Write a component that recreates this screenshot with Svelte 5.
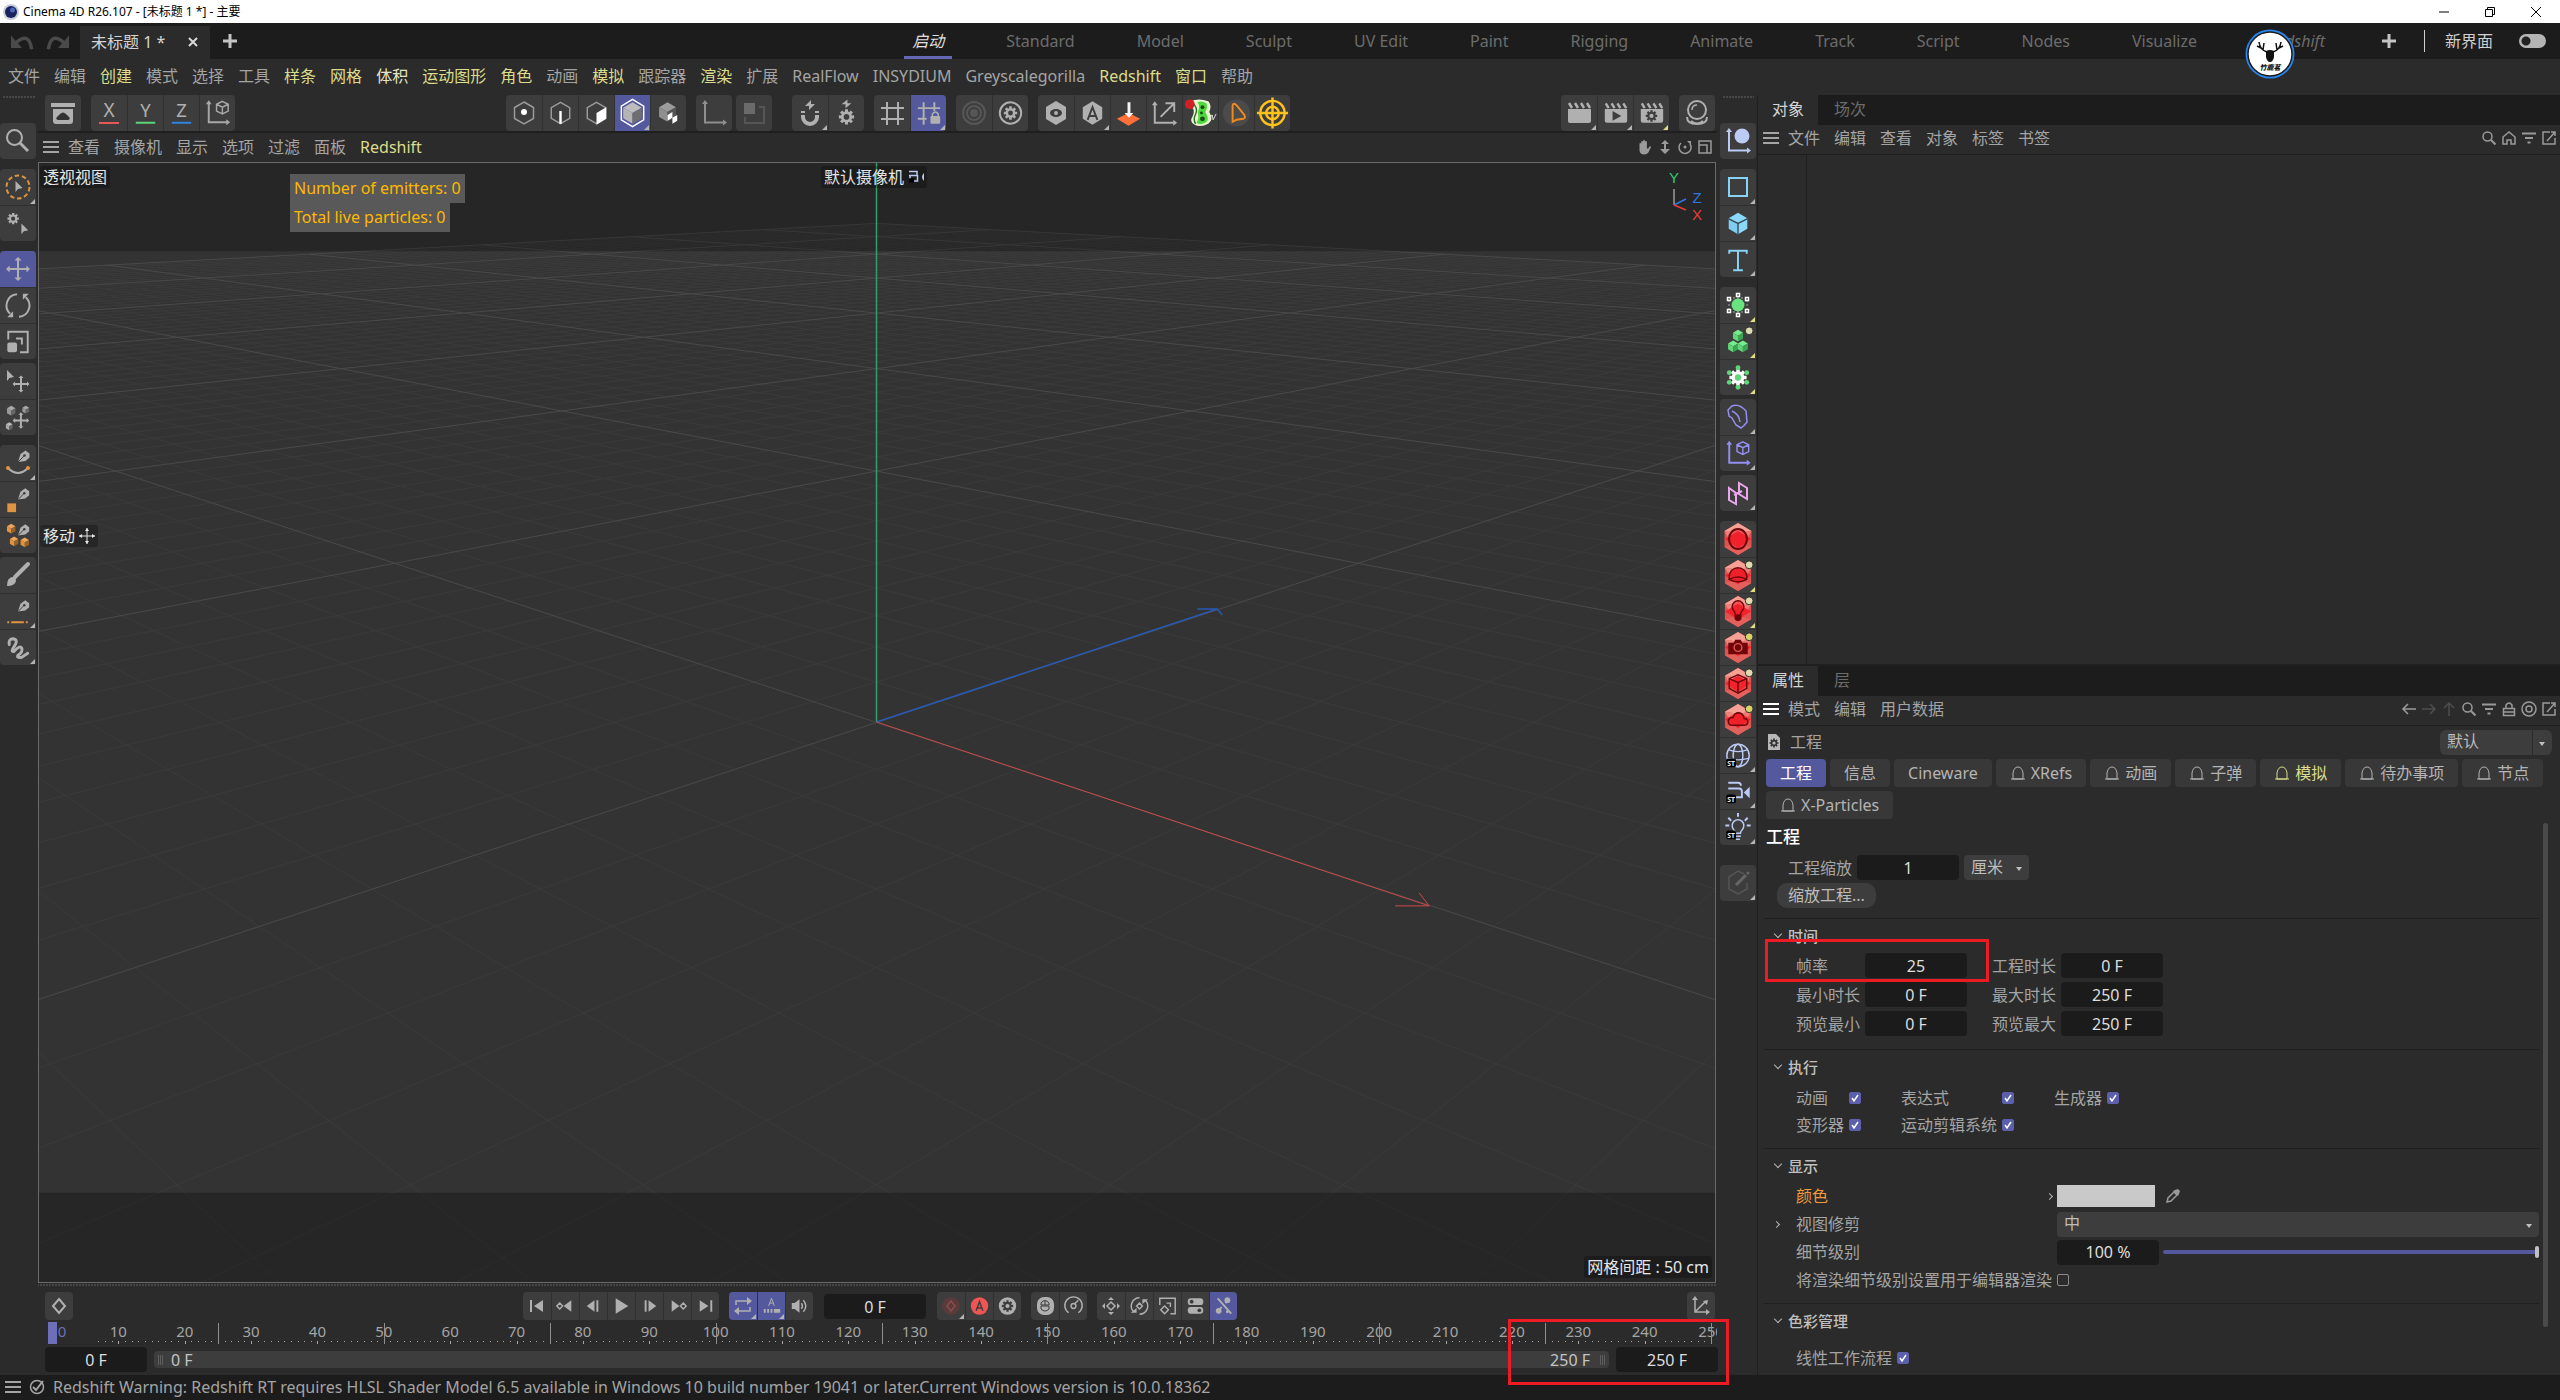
<script lang="ts">
	interface Tool {
		icon: string;
		label: string;
		on?: boolean;
		dim?: boolean;
		corner?: 'grey' | 'yellow';
	}
	interface Group {
		gap?: 'none' | 'tight' | 'wide';
		tools: Tool[];
	}

	const G = '#b0b0b0';
	const ORANGE = '#e09440';

	// ---- shared icon parts ----
	function gear(cx: number, cy: number, r: number, fill = G, hole = '#3d3d3d') {
		const pts: string[] = [];
		for (let i = 0; i < 8; i++) {
			const a = (i * Math.PI) / 4;
			for (const [off, k] of [
				[-0.27, 0.72],
				[-0.2, 1],
				[0.2, 1],
				[0.27, 0.72]
			]) {
				pts.push(`${(cx + Math.sin(a + off) * r * k).toFixed(2)},${(cy - Math.cos(a + off) * r * k).toFixed(2)}`);
			}
		}
		return `<polygon points="${pts.join(' ')}" fill="${fill}"/><circle cx="${cx}" cy="${cy}" r="${r * 0.36}" fill="${hole}"/>`;
	}

	function cross(cx: number, cy: number, s: number, w = 2) {
		const h = s * 0.3;
		return `<path d="M${cx - s + 2} ${cy}H${cx + s - 2}M${cx} ${cy - s + 2}V${cy + s - 2}" stroke="${G}" stroke-width="${w}"/>
			<path d="M${cx} ${cy - s}l${h} ${h}h${-2 * h}zM${cx} ${cy + s}l${h} ${-h}h${-2 * h}zM${cx - s} ${cy}l${h} ${h}v${-2 * h}zM${cx + s} ${cy}l${-h} ${h}v${-2 * h}z" fill="${G}"/>`;
	}

	function cube(cx: number, cy: number, s: number, top: string, left: string, right: string) {
		const w = s * 0.87;
		const h = s / 2;
		return `<path d="M${cx} ${cy - s}l${w} ${h}l${-w} ${h}l${-w} ${-h}z" fill="${top}"/>
			<path d="M${cx - w} ${cy - h}l${w} ${h}v${s}l${-w} ${-h}z" fill="${left}"/>
			<path d="M${cx + w} ${cy - h}l${-w} ${h}v${s}l${w} ${-h}z" fill="${right}"/>`;
	}

	const nib = `<path d="M18 17l2.500-8 5-3.500 4 3v4l-4 3.500z" fill="${G}"/><path d="M18 17l6-6" stroke="#3d3d3d"/><circle cx="24.500" cy="10.500" r="1.300" fill="#3d3d3d"/>`;
	const nibHigh = `<g transform="translate(0 1)">${nib}</g>`;
	const cursor = (x: number, y: number) => `<path d="M${x} ${y}v11l2.500-3 4.500-1z" fill="${G}"/>`;
	const hexLine = `<path d="M18 7l9.500 5.500v11L18 29l-9.500-5.500v-11z" fill="none" stroke="#9a9a9a" stroke-width="1.500"/>`;
	const axes = (c: string) =>
		`<path d="M9 8v19.500h19" fill="none" stroke="${c}" stroke-width="2"/><path d="M9 5l3 4H6zM31 27.500l-4-3v6z" fill="${c}"/>`;
	const wireCube = (c: string) =>
		`<path d="M23 6l6 3v7l-6 3-6-3V9zM17 9l6 3 6-3M23 12v7" fill="none" stroke="${c}" stroke-width="1.500"/>`;
	const grid4 = '<path d="M13 7v23M24 7v23M7 13h23M7 24h23" stroke="#b0b0b0" stroke-width="2"/>';
	const letter = (ch: string, colour: string) =>
		`<text x="18" y="22" text-anchor="middle" font-size="19" fill="${G}">${ch}</text><path d="M8 28h20" stroke="${colour}" stroke-width="2"/>`;
	const clapper = `<path d="M7 14h23v12q0 2-2 2H9q-2 0-2-2z" fill="${G}"/><path d="M8 8l3 5M14 8l3 5M20 8l3 5M26 8l3 5" stroke="${G}" stroke-width="2.500"/>`;
	const redHex = (inner: string) => `<path d="M18 2l13.500 8v16L18 34 4.500 26V10z" fill="#e0524f"/>
		<path d="M18 2l13.500 8L18 12 4.500 10z" fill="#f5a196"/><path d="M4.500 10L18 12l-9 6z" fill="#ee857d"/><path d="M31.500 10L18 12l9 6z" fill="#ec7a72"/>
		<path d="M4.500 26L18 34l13.500-8-9-2h-9z" fill="#e4605c"/><path d="M4.500 18l7-4 6.500-4 6.500 4 7 4-7 4-6.500 5-6.500-5z" fill="#f3222c"/>${inner}`;
	const dark = '#6d0509';
	const dot = (c: string) => `<circle cx="29.500" cy="7" r="4" fill="${c}" stroke="#2b2b2b"/>`;
	const st = `<rect x="6" y="21" width="10" height="9" rx="2" fill="#000"/><text x="11" y="28.500" text-anchor="middle" font-size="7" font-weight="700" fill="#e8ecff">ST</text>`;
	const sky = '#bccbf5';

	// 36 x 36 drawings
	const big: Record<string, string> = {
		search: `<circle cx="14.500" cy="14.500" r="7.500" fill="none" stroke="${G}" stroke-width="2"/><path d="M20 20l8 8" stroke="${G}" stroke-width="3"/>`,
		live: `<circle cx="18" cy="18" r="11.500" fill="none" stroke="${ORANGE}" stroke-width="2" stroke-dasharray="4.500 2.720"/>${cursor(15.5, 12)}`,
		gearCursor: gear(13, 13, 6) + cursor(21.5, 18),
		move: cross(18, 18, 12),
		rotate: `<path d="M17 6.500A11.500 11.500 0 0 0 10 26.500M19 29.500A11.500 11.500 0 0 0 26 9.500" fill="none" stroke="${G}" stroke-width="2"/><path d="M13 30H7l6-6zM23 6h6l-6 6z" fill="${G}"/>`,
		scale: `<path d="M8 16V8h20v21H20" fill="none" stroke="${G}" stroke-width="2"/><rect x="7" y="19" width="10" height="10" rx="2" fill="${G}"/><path d="M16 15h6v6" fill="none" stroke="${G}" stroke-width="2"/>`,
		place: cursor(7, 7) + cross(21, 21, 8.5),
		scatter: cube(11, 11, 5, '#aaa', '#999', '#666') + cube(26, 10, 4, '#aaa', '#999', '#666') + cube(9, 27, 4, '#bbb', '#aaa', '#666') + cross(21, 21, 8.5),
		spline: nib + `<path d="M8 23q10 10 20 0" fill="none" stroke="${G}" stroke-width="2"/><circle cx="8" cy="23" r="2" fill="${ORANGE}"/><circle cx="28" cy="23" r="2" fill="${ORANGE}"/>`,
		polyPen: nibHigh + `<rect x="7" y="22" width="9" height="9" fill="${ORANGE}"/>`,
		cubesPen: nibHigh + [[11, 11], [14, 24], [25, 25]].map(([x, y]) => cube(x, y, 5, '#eda75a', '#e09440', '#9c6328')).join(''),
		brush: `<path d="M28 7L15 20" stroke="${G}" stroke-width="4" stroke-linecap="round"/><path d="M7 29q0-8 5-9 4 0 4 4-1 5-9 5z" fill="${G}"/>`,
		dashPen: nibHigh + `<path d="M7 29h2M11 29h13M26 29h2" stroke="${ORANGE}" stroke-width="2"/>`,
		squiggle: `<path d="M9 15q-1-6 4-6 6 1 1 8-4 6 0 5 6-7 8-3 1 4-4 7-2 3 4 2l6-4" fill="none" stroke="${G}" stroke-width="3" stroke-linecap="round"/>`,
		archive: `<rect x="6" y="8" width="24" height="4" fill="${G}"/><path d="M8 14h20v12q0 3-3 3H11q-3 0-3-3z" fill="${G}"/><path d="M13 25q-3-1-1-3l2-2q4-5 8 0l2 2q2 2-1 3z" fill="#333"/>`,
		axisX: letter('X', '#e45858'),
		axisY: letter('Y', '#5fd378'),
		axisZ: letter('Z', '#2f82e0'),
		coords: axes('#a8a8a8') + wireCube('#a8a8a8'),
		point: hexLine + '<circle cx="18" cy="17" r="3" fill="#fff"/>',
		edge: hexLine + '<path d="M18 16v13" stroke="#fff" stroke-width="2.500"/>',
		poly: hexLine + '<path d="M18 18l10-6v12l-10 6z" fill="#fff"/>',
		object: '<path d="M18 4l11.500 7v14L18 32 6.500 25V11z" fill="none" stroke="#fff" stroke-width="1.500"/>' + cube(18, 18, 11, '#bdbdbd', '#b5b5b5', '#6f6f6f'),
		uv: cube(17, 17, 10, '#9c9c9c', '#8f8f8f', '#555') + '<path d="M17 20l5-3v6l5-3v6l-5 3v-6l-5 3z" fill="#fff"/>',
		axis: axes('#8f8f8f'),
		tweak: '<rect x="8" y="8" width="11" height="11" fill="#6a6a6a"/><path d="M23 12h5v16H9v-6" fill="none" stroke="#555" stroke-width="2"/>',
		snap: `<path d="M11 16v6a7 7 0 0 0 14 0v-6" fill="none" stroke="${G}" stroke-width="4"/><path d="M9 19h18" stroke="#3d3d3d" stroke-width="2"/><path d="M19 5l-6 6h4v4l6-6h-4z" fill="${G}"/>`,
		snapGear: gear(18, 22, 8) + `<path d="M19 4l-6 5h4v4l6-5h-4z" fill="${G}"/>`,
		grid: grid4,
		gridLock: '<path d="M13 7v23M24 7v9M7 13h23M7 24h9" stroke="#b0b0b0" stroke-width="2"/><rect x="20" y="21" width="10" height="8" rx="1" fill="#b0b0b0"/><path d="M22 21v-2q3-4 6 0v2" fill="none" stroke="#b0b0b0" stroke-width="1.500"/>',
		soft: '<g fill="none" stroke="#565656" stroke-width="2"><circle cx="18" cy="18" r="11"/><circle cx="18" cy="18" r="7"/></g><circle cx="18" cy="18" r="4" fill="#565656"/>',
		softGear: `<circle cx="18" cy="18" r="11" fill="none" stroke="${G}" stroke-width="2"/>` + gear(18, 18, 7),
		view: `<path d="M18 6l10 6v12l-10 6-10-6V12z" fill="${G}"/><ellipse cx="18" cy="18" rx="6" ry="4" fill="#3d3d3d"/><circle cx="18" cy="18" r="2" fill="${G}"/>`,
		auto: `<path d="M18 6l10 6v12l-10 6-10-6V12z" fill="${G}"/><path d="M13 25l5-13 5 13M15 21h6" fill="none" stroke="#3d3d3d" stroke-width="2"/>`,
		drop: '<path d="M18 18l12 6-12 7-12-7z" fill="#ff7038"/><path d="M17 7h3v11h3l-4.500 5-4.500-5h3z" fill="#f4f4f4"/>',
		workplane: `<path d="M8 9v19h20" fill="none" stroke="${G}" stroke-width="2"/><path d="M8 6l3 4H5zM31 28l-4-3v6z" fill="${G}"/><path d="M14 22L28 8M19 8h9v9" fill="none" stroke="${G}" stroke-width="2"/>`,
		plugin: '<path d="M8 6q8-4 18 0 4 4 1 11 5 8-1 12-8 4-14 1-6-3-2-9 3-8-2-9z" fill="#e9f5cf"/><path d="M15 7q4-2 9 1 2 4-1 9 5 8 0 11-6 3-9 0 3-5 1-11 3-5 0-10z" fill="#4fd83f"/><path d="M10 8q6 5 3 11-3 6 0 10" fill="none" stroke="#2e6d2a" stroke-width="1.500"/><circle cx="20" cy="12" r="2" fill="#174d17"/><circle cx="19" cy="18" r="1.500" fill="#174d17"/><circle cx="20" cy="24" r="2.500" fill="#174d17"/><circle cx="7" cy="9" r="5" fill="#d32027"/><path d="M27 24l3-4 1 5 3-6" fill="none" stroke="#ddd"/>',
		arrowO: '<circle cx="18" cy="18" r="14" fill="#4b4b4b"/><path d="M14 10v17l4-2 7-1q3-1 1-4l-8-10q-3-3-4 0z" fill="none" stroke="#f08a1d" stroke-width="2"/>',
		target: '<g fill="none" stroke="#ffc21a" stroke-width="2.500"><circle cx="18" cy="18" r="12.500"/><circle cx="18" cy="18" r="6.500"/><path d="M18 2v32M2 18h32"/></g>',
		clap: clapper,
		clapPlay: clapper + '<path d="M15 16l9 5-9 5z" fill="#3d3d3d"/>',
		clapGear: clapper + gear(18, 21, 6, '#3d3d3d', G),
		material: `<circle cx="18" cy="15" r="9" fill="none" stroke="${G}" stroke-width="2"/><path d="M13 15q0-5 5-5" fill="none" stroke="${G}" stroke-width="1.500"/><path d="M8 22q0 7 10 7t10-7M12 26q6 5 12 0" fill="none" stroke="${G}" stroke-width="2"/>`,
		nullObj: axes(sky) + `<circle cx="22" cy="13" r="7.500" fill="${sky}"/>`,
		rect: '<rect x="9" y="9" width="18" height="18" fill="none" stroke="#86d3f5" stroke-width="2"/>',
		cubeBlue: cube(18, 18, 11, '#8ad8fa', '#7fcdf2', '#8ad8fa') + '<path d="M8 13l10 5 10-5M18 18v11" fill="none" stroke="#3a4c58" stroke-width="1.500"/>',
		textObj: '<path d="M9 12V9h18v3M18 9v20M13 29h10" fill="none" stroke="#86d3f5" stroke-width="2"/>',
		subdiv: '<rect x="9" y="11" width="18" height="14" fill="none" stroke="#aaa" stroke-dasharray="2 2"/><circle cx="18" cy="18" r="6.500" fill="#68e37f"/><g fill="#3d3d3d" stroke="#fff" stroke-width="1.500"><path d="M16.500 6.500h3v3h-3zM16.500 26.500h3v3h-3zM7.500 10.500h3v3h-3zM25.500 10.500h3v3h-3zM7.500 22.500h3v3h-3zM25.500 22.500h3v3h-3z"/></g>',
		cloner: [[18, 12], [13, 23], [23, 23]].map(([x, y]) => cube(x, y, 6, '#77ec8f', '#5fd677', '#3aa653')).join('') + dot('#dedcae'),
		effector: gear(18, 18, 9, '#fff', '#5fd677') + [[18, 8], [18, 28], [9, 13], [27, 13], [9, 23], [27, 23]].map(([x, y]) => `<circle cx="${x}" cy="${y}" r="2.500" fill="#5fd677"/>`).join(''),
		bend: '<path d="M12 7q7-3 14 5l1 11q-3 4-6 6l-5-3-4-7-3-2-1-6z" fill="none" stroke="#938fee" stroke-width="1.500"/><path d="M12 12q7 3 8 11" fill="none" stroke="#938fee" stroke-width="1.500"/>',
		deformAxis: axes('#938fee') + wireCube('#938fee'),
		field: '<path d="M9 13l7 5v11l-7-4zM19 8l8 5v11l-8-5zM14 20l8-4" fill="none" stroke="#eba6ee" stroke-width="2"/>',
		rsSphere: redHex(`<ellipse cx="18" cy="18" rx="9" ry="10" fill="#ef1f29" fill-opacity="0.5" stroke="${dark}" stroke-width="2"/>`),
		rsDome: redHex(`<path d="M9 22v-3a9 9 0 0 1 18 0v3q-9 5-18 0 9-5 18 0" fill="#ef1f29" fill-opacity="0.6" stroke="${dark}" stroke-width="1.500"/>`) + dot('#dedcae'),
		rsLight: redHex(`<path d="M15.500 22q0-3-2-5a6 6 0 1 1 9 0q-2 2-2 5z" fill="#ef1f29" fill-opacity="0.6" stroke="${dark}" stroke-width="1.500"/><path d="M14.500 21h7v5q-3.500 4-7 0z" fill="${dark}"/>`) + dot('#dedcae'),
		rsCamera: redHex(`<path d="M8 13h6l1-3h6l1 3h6v12H8z" fill="${dark}"/><circle cx="18" cy="18" r="4" fill="none" stroke="#e0524f" stroke-width="1.500"/>`) + dot('#d8d26a'),
		rsCube: redHex(`<path d="M18 9l9 4v10l-9 5-9-5V13zM9 13l9 4 9-4M18 17v11" fill="none" stroke="${dark}" stroke-width="1.500"/>`) + dot('#dedcae'),
		rsCloud: redHex(`<path d="M11 24h14q4-1 3-5-1-2-4-2 0-5-5-6-5 0-6 5-5 0-5 4 0 3 3 4z" fill="#ef1f29" fill-opacity="0.6" stroke="${dark}" stroke-width="1.500"/>`) + dot('#d8d26a'),
		globe: `<g fill="none" stroke="${sky}" stroke-width="1.500"><circle cx="18" cy="18" r="11.500"/><ellipse cx="18" cy="18" rx="5" ry="11.500"/><path d="M8 12q10 4 20 0M7 21q11 3 22 0"/></g>${st}`,
		camera: `<path d="M8 9h10q3 0 3 3M8 15h11q3 0 3 3v6H10" fill="none" stroke="${sky}" stroke-width="2"/><path d="M30 13v12l-6-6z" fill="${sky}"/>${st}`,
		bulb: `<path d="M15.500 24q0-2-2-4a6 6 0 1 1 9 0q-2 2-2 4zM15 27h6M16 30h4" fill="none" stroke="${sky}" stroke-width="1.500"/><path d="M18 3v4M8 8l3 3M28 8l-3 3M5 16h4M27 16h4" stroke="${sky}" stroke-width="2"/>${st}`,
		asset: '<path d="M24 9l-6-3-9 6v12l9 5 9-5v-6" fill="none" stroke="#555" stroke-width="1.500"/><path d="M16 20L26 10" stroke="#666" stroke-width="3"/><circle cx="28" cy="8" r="1.500" fill="#666"/>'
	};

	// 28 x 28 drawings
	const mid: Record<string, string> = {
		key: `<path d="M14 7l6 7-6 7-6-7z" fill="none" stroke="${G}" stroke-width="2"/>`,
		start: `<path d="M7 8h2v12H7zM20 8v12l-9-6z" fill="${G}"/>`,
		prevKey: `<path d="M20 8v12l-8-6z" fill="${G}"/><path d="M8 11l3 3-3 3-3-3z" fill="none" stroke="${G}" stroke-width="1.500"/>`,
		prev: `<path d="M15 8v12l-8-6zM17 8h2v12h-2z" fill="${G}"/>`,
		play: `<path d="M8 6l13 8-13 8z" fill="${G}"/>`,
		next: `<path d="M13 8v12l8-6zM9 8h2v12H9z" fill="${G}"/>`,
		nextKey: `<path d="M8 8v12l8-6z" fill="${G}"/><path d="M20 11l3 3-3 3-3-3z" fill="none" stroke="${G}" stroke-width="1.500"/>`,
		end: `<path d="M19 8h2v12h-2zM8 8v12l9-6z" fill="${G}"/>`,
		loop: `<path d="M7 13V9h12M21 15v4H9" fill="none" stroke="${G}" stroke-width="1.500"/><path d="M18 5l5 4-5 4zM10 15l-5 4 5 4z" fill="${G}"/>`,
		autoTime: `<path d="M11 14l3-8 3 8M12 11h4" fill="none" stroke="${G}"/><path d="M6 19h14" stroke="${G}" stroke-width="4" stroke-dasharray="2 1.500"/><path d="M18 17h5v4h-5z" fill="${G}"/>`,
		sound: `<path d="M6 11h3l5-4v14l-5-4H6z" fill="${G}"/><path d="M16 11q2 3 0 6M18 8q5 6 0 12" fill="none" stroke="${G}" stroke-width="1.500"/>`,
		record: '<circle cx="14" cy="14" r="9" fill="#5a3b3b"/><path d="M14 9l4 5-4 5-4-5z" fill="none" stroke="#8a4a4a" stroke-width="1.500"/>',
		autoKey: '<circle cx="14" cy="14" r="9" fill="#f05455"/><path d="M10.500 19L14 9.500l3.500 9.500M12 16h4" fill="none" stroke="#3d3d3d" stroke-width="1.500"/>',
		keyGear: `<circle cx="14" cy="14" r="9" fill="${G}"/>` + gear(14, 14, 6, '#3d3d3d', G),
		mouse: `<rect x="6" y="5" width="17" height="18" rx="7" fill="${G}"/><path d="M10 13h8v-2q-4-5-8 0zM14 9v4M10 14v3q4 4 8 0v-3z" fill="none" stroke="#3d3d3d"/>`,
		gauge: `<path d="M9 21a9 9 0 1 1 10 0" fill="none" stroke="${G}" stroke-width="1.500"/><circle cx="14" cy="14" r="2.500" fill="none" stroke="${G}" stroke-width="1.500"/><path d="M15 12l4-4" stroke="${G}" stroke-width="1.500"/>`,
		posKey: `<path d="M14 10l4 4-4 4-4-4z" fill="none" stroke="${G}" stroke-width="1.500"/><path d="M14 5l3 3h-6zM14 23l3-3h-6zM5 14l3 3v-6zM23 14l-3 3v-6z" fill="${G}"/>`,
		rotKey: `<path d="M14 11l3 3-3 3-3-3z" fill="none" stroke="${G}" stroke-width="1.500"/><path d="M8 20A8.500 8.500 0 0 1 14 5.500M20 8a8.500 8.500 0 0 1-6 14.500" fill="none" stroke="${G}" stroke-width="1.500"/><path d="M5 21h6v-5zM23 7h-6v5z" fill="${G}"/>`,
		scaleKey: `<path d="M6 13V6h16v16h-5" fill="none" stroke="${G}" stroke-width="1.500"/><path d="M11 14l4 4-4 4-4-4z" fill="none" stroke="${G}" stroke-width="1.500"/><path d="M13 11h4v4" fill="none" stroke="${G}" stroke-width="1.500"/>`,
		paramKey: `<rect x="6" y="6" width="16" height="7" rx="3" fill="${G}"/><rect x="6" y="15" width="16" height="7" rx="3" fill="${G}"/><circle cx="10" cy="9.500" r="2" fill="#3d3d3d"/><circle cx="18" cy="18.500" r="2" fill="#3d3d3d"/>`,
		plaKey: `<path d="M8 6l14 16M9 19l3-4M16 11l3-3" stroke="${G}" stroke-width="2"/><circle cx="9" cy="19" r="3" fill="${G}"/><circle cx="18" cy="8" r="3" fill="${G}"/><circle cx="18" cy="20" r="1.500" fill="${G}"/>`,
		curve: `<path d="M8 7v13h12M9 19L18 10" fill="none" stroke="${G}" stroke-width="1.500"/><path d="M8 4l3 4H5zM23 20l-4-3v6zM21 8l-1 5-4-4z" fill="${G}"/>`
	};

	// 16 x 16 drawings
	const small: Record<string, string> = {
		menu: '<path d="M0 3h16M0 8h16M0 13h16" stroke="currentColor" stroke-width="2"/>',
		undo: '<path d="M4 9q9-8 11 5" fill="none" stroke="currentColor" stroke-width="2.500"/><path d="M0 4v9h8z" fill="currentColor"/>',
		redo: '<path d="M16 4v9H8z" fill="currentColor"/><path d="M12 9Q3 1 1 14" fill="none" stroke="currentColor" stroke-width="2.500"/>',
		hand: '<path d="M2.500 9V4.500q.8-1 1.700 0V8 2.500q1-1 1.900 0V7.500 1.500q1-1 1.900 0v6 -5q1-1 1.900 0V9l1 1 1.600-2.500q1.500-.5 1.500.5l-2.600 5.500q-1.500 2-4 2-4.500 0-4.900-4z" fill="currentColor"/>',
		updown: '<path d="M8 3v9" stroke="currentColor" stroke-width="2"/><path d="M8 1l4 4H4zM8 15l5-5H3z" fill="currentColor"/>',
		turn: '<path d="M4 4a6 6 0 1 0 9 1" fill="none" stroke="currentColor" stroke-width="1.500"/><circle cx="8" cy="8" r="1.500" fill="currentColor"/><path d="M10 2h4v4z" fill="currentColor"/>',
		panes: '<path d="M2 2h12v12H2zM2 6h8v8" fill="none" stroke="currentColor" stroke-width="1.500"/>',
		search: '<circle cx="6.500" cy="6.500" r="4.500" fill="none" stroke="currentColor" stroke-width="1.500"/><path d="M10 10l4.500 4.500" stroke="currentColor" stroke-width="2"/>',
		home: '<path d="M2 14V7l6-5 6 5v7h-4v-4H6v4z" fill="none" stroke="currentColor" stroke-width="1.500"/>',
		filter: '<path d="M1 3.500h14M4 8h8M6.500 12.500h3" stroke="currentColor" stroke-width="2"/>',
		open: '<path d="M9 2H2v12h12V8M10 2h4v4M14 2L6 11" fill="none" stroke="currentColor" stroke-width="1.500"/>',
		back: '<path d="M15 8H2M7 3L2 8l5 5" fill="none" stroke="currentColor" stroke-width="1.500"/>',
		forward: '<path d="M1 8h13M9 3l5 5-5 5" fill="none" stroke="currentColor" stroke-width="1.500"/>',
		up: '<path d="M8 15V2M3 7l5-5 5 5" fill="none" stroke="currentColor" stroke-width="1.500"/>',
		lock: '<path d="M2.500 7.500h11v7h-11zM5 7V4q3-4 6 0v3M2 11h12" fill="none" stroke="currentColor" stroke-width="1.500"/>',
		ring: '<circle cx="8" cy="8" r="7" fill="none" stroke="currentColor" stroke-width="1.500"/><circle cx="8" cy="8" r="3" fill="none" stroke="currentColor" stroke-width="1.500"/>',
		check: '<circle cx="8" cy="8" r="6.500" fill="none" stroke="currentColor" stroke-width="1.500"/><path d="M4 8l3 3 7-9" fill="none" stroke="currentColor" stroke-width="2"/>',
		bell: '<path d="M3 14V8q1-6 5-6t5 6v6zM1 14h14" fill="none" stroke="currentColor"/>',
		doc: '<path d="M2 0h8l4 4v12H2z" fill="#b8b8b8"/>' + gear(8, 9, 4.5, '#333', '#b8b8b8'),
		dropper: '<path d="M2 14l1-4 6-6 3 3-6 6z" fill="none" stroke="currentColor" stroke-width="1.500"/><path d="M8 3l5 5 1-2 1-3-2-2-3 1z" fill="currentColor"/>',
		cross: '<path d="M8 0v16M0 8h16" stroke="currentColor"/><path d="M8 0l2 3H6zM8 16l2-3H6zM0 8l3 2V6zM16 8l-3 2V6z" fill="currentColor"/>',
		cam: '<path d="M1 2.500h8v4H1M2 6.500v3M9.500 6v6H6" fill="none" stroke="#bccbf5" stroke-width="1.500"/><path d="M16 4v8q-4-4 0-8z" fill="#bccbf5"/><path d="M1 9.500h5v4H1z" fill="#000"/>',
		c4d: '<circle cx="8" cy="8" r="8" fill="#c9cedb"/><circle cx="8" cy="8" r="6" fill="#19245c"/><circle cx="9.500" cy="6" r="2.500" fill="#4c68b8"/>'
	};

	const t = (icon: string, label: string, extra: Partial<Tool> = {}): Tool => ({ icon, label, ...extra });

	const leftTools: Group[] = [
		{ tools: [t('search', '搜索')] },
		{ tools: [t('live', '实时选择', { corner: 'grey' }), t('gearCursor', '选择设置')] },
		{ tools: [t('move', '移动', { on: true }), t('rotate', '旋转'), t('scale', '缩放')] },
		{ gap: 'tight', tools: [t('place', '放置'), t('scatter', '散布')] },
		{ tools: [t('spline', '样条画笔', { corner: 'grey' }), t('polyPen', '多边形画笔'), t('cubesPen', '体积画笔')] },
		{ gap: 'tight', tools: [t('brush', '笔刷'), t('dashPen', '切线', { corner: 'grey' }), t('squiggle', '涂抹', { corner: 'grey' })] }
	];

	const rightTools: Group[] = [
		{ tools: [t('nullObj', '空白')] },
		{ tools: [t('rect', '矩形', { corner: 'grey' }), t('cubeBlue', '立方体', { corner: 'grey' }), t('textObj', '文本', { corner: 'grey' })] },
		{ tools: [t('subdiv', '细分曲面', { corner: 'yellow' }), t('cloner', '克隆', { corner: 'yellow' }), t('effector', '效果器', { corner: 'yellow' })] },
		{ gap: 'tight', tools: [t('bend', '弯曲', { corner: 'grey' }), t('deformAxis', '变形', { corner: 'grey' })] },
		{ gap: 'tight', tools: [t('field', '域', { corner: 'grey' })] },
		{
			tools: [
				t('rsSphere', 'RS 物理'),
				t('rsDome', 'RS 穹顶', { corner: 'yellow' }),
				t('rsLight', 'RS 灯光', { corner: 'yellow' }),
				t('rsCamera', 'RS 摄像机'),
				t('rsCube', 'RS 代理'),
				t('rsCloud', 'RS 体积'),
				t('globe', '天空', { corner: 'grey' }),
				t('camera', '摄像机', { corner: 'grey' }),
				t('bulb', '灯光', { corner: 'grey' })
			]
		},
		{ gap: 'wide', tools: [t('asset', '资产', { corner: 'grey' })] }
	];

	const topLeft: Group[] = [
		{ gap: 'none', tools: [t('archive', '资产浏览器')] },
		{ tools: [t('axisX', 'X 轴'), t('axisY', 'Y 轴'), t('axisZ', 'Z 轴'), t('coords', '坐标系统')] }
	];
	const topCentre: Group[] = [
		{
			gap: 'none',
			tools: [t('point', '点'), t('edge', '边'), t('poly', '多边形'), t('object', '模型', { on: true, corner: 'grey' }), t('uv', 'UV')]
		},
		{ tools: [t('axis', '启用轴心')] },
		{ gap: 'tight', tools: [t('tweak', '视窗独显', { dim: true })] },
		{ gap: 'wide', tools: [t('snap', '捕捉', { corner: 'grey' }), t('snapGear', '捕捉设置')] },
		{ tools: [t('grid', '工作平面'), t('gridLock', '锁定工作平面', { on: true, corner: 'grey' })] },
		{ tools: [t('soft', '柔和选择', { dim: true }), t('softGear', '柔和设置')] },
		{
			tools: [
				t('view', '显示'),
				t('auto', '自动', { corner: 'grey' }),
				t('drop', '落到地面'),
				t('workplane', '对齐'),
				t('plugin', '插件'),
				t('arrowO', '箭头'),
				t('target', '目标')
			]
		}
	];
	const topRight: Group[] = [
		{ gap: 'none', tools: [t('clap', '渲染视图', { corner: 'grey' }), t('clapPlay', '渲染到图像查看器', { corner: 'grey' }), t('clapGear', '渲染设置', { corner: 'yellow' })] },
		{ tools: [t('material', '材质')] }
	];

	const transport: Group[] = [
		{
			gap: 'none',
			tools: [
				t('start', '转到开始'),
				t('prevKey', '上一关键帧'),
				t('prev', '上一帧'),
				t('play', '播放'),
				t('next', '下一帧'),
				t('nextKey', '下一关键帧'),
				t('end', '转到结束')
			]
		},
		{ tools: [t('loop', '循环', { on: true, corner: 'grey' }), t('autoTime', '自动时间', { on: true, corner: 'grey' }), t('sound', '声音')] }
	];
	const keying: Group[] = [
		{ tools: [t('record', '记录', { corner: 'grey' }), t('autoKey', '自动关键帧'), t('keyGear', '关键帧设置')] },
		{ tools: [t('mouse', '鼠标'), t('gauge', '速度')] },
		{ tools: [t('posKey', '位置'), t('rotKey', '旋转'), t('scaleKey', '缩放'), t('paramKey', '参数'), t('plaKey', '点级别', { on: true })] }
	];

	const layouts = ['Standard', 'Model', 'Sculpt', 'UV Edit', 'Paint', 'Rigging', 'Animate', 'Track', 'Script', 'Nodes', 'Visualize'];

	const mainMenu: [string, string?][] = [
		['文件'],
		['编辑'],
		['创建', 'hot'],
		['模式'],
		['选择'],
		['工具'],
		['样条', 'hot'],
		['网格', 'hot'],
		['体积', 'warm'],
		['运动图形', 'hot'],
		['角色', 'hot'],
		['动画'],
		['模拟', 'hot'],
		['跟踪器'],
		['渲染', 'hot'],
		['扩展'],
		['RealFlow'],
		['INSYDIUM'],
		['Greyscalegorilla'],
		['Redshift', 'hot'],
		['窗口', 'hot'],
		['帮助']
	];
	const viewMenu = ['查看', '摄像机', '显示', '选项', '过滤', '面板'];
	const objectMenu = ['文件', '编辑', '查看', '对象', '标签', '书签'];

	const attrTabs = [
		{ name: '工程', on: true },
		{ name: '信息' },
		{ name: 'Cineware' },
		{ name: 'XRefs', bell: true },
		{ name: '动画', bell: true },
		{ name: '子弹', bell: true },
		{ name: '模拟', bell: true, hot: true },
		{ name: '待办事项', bell: true },
		{ name: '节点', bell: true },
		{ name: 'X-Particles', bell: true }
	];

	const timeFields = [
		['帧率', '25'],
		['工程时长', '0 F'],
		['最小时长', '0 F'],
		['最大时长', '250 F'],
		['预览最小', '0 F'],
		['预览最大', '250 F']
	];
	const execChecks = ['动画', '表达式', '生成器', '变形器', '运动剪辑系统'];

	// ---- perspective ground grid ----
	const CX = 838;
	const HORIZON = -37;
	const CAM = 1.375;
	const EXTENT = 7;

	function project(u: number, v: number) {
		const d = CAM + (u + v) / 2;
		return `${(CX + (904 * (v - u)) / d).toFixed(1)} ${(HORIZON + 821.6 / d).toFixed(1)}`;
	}

	function gridPath(major: boolean) {
		let d = '';
		for (let i = -EXTENT * 10; i <= EXTENT * 10; i++) {
			if ((i % 10 === 0) !== major) continue;
			const a = i / 10;
			// keep the near end in front of the camera
			const near = Math.max(-EXTENT, 0.3 - 2 * CAM - a);
			if (near >= EXTENT) continue;
			d += `M${project(a, near)}L${project(a, EXTENT)}M${project(near, a)}L${project(EXTENT, a)}`;
		}
		return d;
	}
	const minorLines = gridPath(false);
	const majorLines = gridPath(true);

	// ---- timeline ruler ----
	const LAST = 250;
	let rulerWidth = $state(1672);
	const frameX = (f: number) => 7 + (f * (rulerWidth - 13)) / LAST;
	const frames = Array.from({ length: LAST - 6 }, (_, i) => i + 7);
	const tens = Array.from({ length: LAST / 10 }, (_, i) => (i + 1) * 10);
	const seconds = Array.from({ length: LAST / 25 }, (_, i) => (i + 1) * 25);

	let detail = $state(100);
</script>

{#snippet icon(name: string)}
	<svg class="i16" viewBox="0 0 16 16" aria-hidden="true">{@html small[name]}</svg>
{/snippet}

{#snippet groups(list: Group[], set: Record<string, string>, size: number)}
	{#each list as group}
		<div class="group {group.gap ?? ''}">
			{#each group.tools as tool}
				<button class="tool {tool.corner ?? ''}" class:on={tool.on} class:dim={tool.dim} aria-label={tool.label}>
					<svg viewBox="0 0 {size} {size}" aria-hidden="true">{@html set[tool.icon]}</svg>
				</button>
			{/each}
		</div>
	{/each}
{/snippet}

<div class="app">
	<header class="titlebar">
		{@render icon('c4d')}
		<span class="title">Cinema 4D R26.107 - [未标题 1 *] - 主要</span>
		<button aria-label="最小化"><svg viewBox="0 0 12 12"><path d="M1 6h10" stroke="#000" /></svg></button>
		<button aria-label="还原"
			><svg viewBox="0 0 12 12"><path d="M1.500 3.500h7v7h-7zM3.500 3V1.500h7v7H9" fill="none" stroke="#000" /></svg></button
		>
		<button aria-label="关闭"><svg viewBox="0 0 12 12"><path d="M1 1l10 10M11 1L1 11" stroke="#000" /></svg></button>
	</header>

	<div class="docbar">
		<button class="history" aria-label="撤销">{@render icon('undo')}</button>
		<button class="history" aria-label="重做">{@render icon('redo')}</button>
		<div class="doc">
			<span>未标题 1 *</span>
			<button aria-label="关闭文档"><svg viewBox="0 0 12 12"><path d="M2 2l8 8M10 2l-8 8" stroke="#d8d8d8" stroke-width="2" /></svg></button>
		</div>
		<button class="plus" aria-label="新建文档"><svg viewBox="0 0 14 14"><path d="M7 0v14M0 7h14" stroke="#c4c4c4" stroke-width="3" /></svg></button>
		<nav class="layouts">
			<button class="active">启动</button>
			{#each layouts as name}
				<button>{name}</button>
			{/each}
			<button class="slanted"
				>Redshift
				<svg class="avatar" viewBox="0 0 50 50" aria-hidden="true">
					<circle cx="25" cy="25" r="24.500" fill="#2a86ea" />
					<circle cx="25" cy="25" r="22" fill="#fff" stroke="#1b1b1b" stroke-width="1.500" />
					<path d="M21 22q4-2 8 0v6q-1 5-4 5t-4-5z" fill="#111" />
					<path d="M22 23q-7-2-8-10M16 19l-4-2M18 21l1-7M28 23q7-2 8-10M34 19l4-2M32 21l-1-7" fill="none" stroke="#111" stroke-width="1.500" />
					<text x="25" y="41" text-anchor="middle" font-size="7" font-weight="900" fill="#111">竹鹿茗</text>
				</svg>
			</button>
		</nav>
		<button class="plus" aria-label="添加界面"><svg viewBox="0 0 14 14"><path d="M7 0v14M0 7h14" stroke="#c4c4c4" stroke-width="3" /></svg></button>
		<label class="newui">
			新界面
			<input type="checkbox" class="toggle" />
		</label>
	</div>

	<nav class="menu main">
		{#each mainMenu as [name, tone]}
			<button class={tone}>{name}</button>
		{/each}
	</nav>

	<div class="work">
		<aside class="rail">
			<div class="grip"></div>
			{@render groups(leftTools, big, 36)}
		</aside>

		<main class="centre">
			<div class="toolbar">
				<div class="cluster">{@render groups(topLeft, big, 36)}</div>
				<div class="cluster">{@render groups(topCentre, big, 36)}</div>
				<div class="cluster">{@render groups(topRight, big, 36)}</div>
			</div>

			<div class="menu viewmenu">
				<button class="burger" aria-label="视图菜单">{@render icon('menu')}</button>
				{#each viewMenu as name}
					<button>{name}</button>
				{/each}
				<button class="hot">Redshift</button>
				<div class="icons">
					<button aria-label="平移">{@render icon('hand')}</button>
					<button aria-label="推拉">{@render icon('updown')}</button>
					<button aria-label="环绕">{@render icon('turn')}</button>
					<button aria-label="切换视图">{@render icon('panes')}</button>
				</div>
			</div>

			<section class="viewport" aria-label="透视视图">
				<svg class="scene" viewBox="0 0 1677 1121" preserveAspectRatio="xMidYMid slice" aria-hidden="true">
					<rect width="1677" height="1121" fill="#333" />
					<path d={minorLines} stroke="#3a3a3a" fill="none" />
					<path d={majorLines} stroke="#494949" fill="none" />
					<path d="M-40 -40H1720V89H-40zM-40 1031H1720V1160H-40z" fill="#000" opacity="0.25" />
					<path d="M838 0V560" stroke="#37a067" stroke-width="1.500" />
					<path d="M838 560L1179 447M1159 447h20l5 6" stroke="#2859b4" stroke-width="1.500" fill="none" />
					<path d="M838 560L1391 744M1381 731l10 13h-34" stroke="#c94b49" fill="none" />
				</svg>
				<span class="tag name">透视视图</span>
				<span class="tag cam">默认摄像机{@render icon('cam')}</span>
				<div class="particles">
					<span>Number of emitters: 0</span>
					<span>Total live particles: 0</span>
				</div>
				<svg class="gizmo" viewBox="0 0 40 64" aria-hidden="true">
					<path d="M9 26V42" stroke="#d5d5d5" />
					<path d="M9 42l12-6" stroke="#2f78e0" stroke-width="1.500" />
					<path d="M9 42l12 5" stroke="#e0403c" stroke-width="1.500" />
					<text x="9" y="20" fill="#2ecc71">Y</text>
					<text x="32" y="40" fill="#2f78e0">Z</text>
					<text x="32" y="57" fill="#e0403c">X</text>
				</svg>
				<span class="tag mode">移动 {@render icon('cross')}</span>
				<span class="tag spacing">网格间距 : 50 cm</span>
			</section>

			<section class="timeline" aria-label="时间线">
				<div class="controls">
					<div class="cluster">{@render groups([{ gap: 'none', tools: [t('key', '关键帧')] }], mid, 28)}</div>
					<div class="cluster">
						{@render groups(transport, mid, 28)}
						<input class="field now" value="0 F" aria-label="当前帧" />
						{@render groups(keying, mid, 28)}
					</div>
					<div class="cluster">{@render groups([{ gap: 'none', tools: [t('curve', '函数曲线')] }], mid, 28)}</div>
				</div>

				<div class="ruler" bind:clientWidth={rulerWidth}>
					<svg aria-hidden="true">
						{#each frames as f}
							<rect x={Math.round(frameX(f))} y="21" width="1" height={f % 10 ? 1 : 3} fill="#a8a8a8" />
						{/each}
						{#each tens as f}
							<text x={frameX(f)} y="17">{f}</text>
						{/each}
						{#each seconds as f}
							<rect x={Math.round(frameX(f))} y="3" width="1" height="21" fill="#8f8f8f" />
						{/each}
						<rect x="3" y="2" width="9" height="22" fill="#6d70b8" />
						<text class="head" x="17" y="17">0</text>
					</svg>
				</div>

				<div class="range">
					<input class="field" value="0 F" aria-label="最小时间" />
					<div class="bar">
						<i></i><span>0 F</span>
						<span class="to">250 F</span><i></i>
					</div>
					<input class="field" value="250 F" aria-label="最大时间" />
				</div>
			</section>
		</main>

		<aside class="rail create">
			<div class="grip"></div>
			{@render groups(rightTools, big, 36)}
		</aside>

		<aside class="panels">
			<section class="panel objects">
				<div class="tabs"><button class="active">对象</button><button>场次</button></div>
				<div class="menu">
					<button class="burger" aria-label="对象菜单">{@render icon('menu')}</button>
					{#each objectMenu as name}
						<button>{name}</button>
					{/each}
					<div class="icons">
						<button aria-label="搜索">{@render icon('search')}</button>
						<button aria-label="主页">{@render icon('home')}</button>
						<button aria-label="过滤">{@render icon('filter')}</button>
						<button aria-label="新窗口">{@render icon('open')}</button>
					</div>
				</div>
				<div class="tree"><div class="gutter"></div></div>
			</section>

			<section class="panel attributes">
				<div class="tabs"><button class="active">属性</button><button>层</button></div>
				<div class="menu">
					<button class="burger bright" aria-label="属性菜单">{@render icon('menu')}</button>
					<button>模式</button>
					<button>编辑</button>
					<button>用户数据</button>
					<div class="icons">
						<button aria-label="后退">{@render icon('back')}</button>
						<button class="off" aria-label="前进">{@render icon('forward')}</button>
						<button class="off" aria-label="向上">{@render icon('up')}</button>
						<button aria-label="搜索">{@render icon('search')}</button>
						<button aria-label="过滤">{@render icon('filter')}</button>
						<button aria-label="锁定">{@render icon('lock')}</button>
						<button aria-label="聚焦">{@render icon('ring')}</button>
						<button aria-label="新窗口">{@render icon('open')}</button>
					</div>
				</div>

				<div class="subject">
					{@render icon('doc')}
					<span>工程</span>
					<div class="select preset">
						<select aria-label="预设"><option>默认</option></select>
					</div>
				</div>

				<div class="attrtabs">
					{#each attrTabs as tab}
						<button class:on={tab.on} class:hot={tab.hot}>
							{#if tab.bell}{@render icon('bell')}{/if}{tab.name}
						</button>
					{/each}
				</div>

				<div class="scroller">
					<div class="form">
						<h2>工程</h2>
						<div class="scale">
							<label for="scale">工程缩放</label>
							<input id="scale" class="field" value="1" />
							<div class="select unit">
								<select aria-label="单位"><option>厘米</option></select>
							</div>
						</div>
						<button class="pill">缩放工程...</button>

						<section class="block">
							<h3>时间</h3>
							<div class="times">
								{#each timeFields as [name, value], i}
									<div class="pair" class:marked={i === 0}>
										<label for="time{i}">{name}</label>
										<input id="time{i}" class="field" {value} />
									</div>
								{/each}
							</div>
						</section>

						<section class="block">
							<h3>执行</h3>
							<div class="checks">
								{#each execChecks as name, i}
									<label for="exec{i}">{name}</label>
									<input id="exec{i}" class="check" type="checkbox" checked />
								{/each}
							</div>
						</section>

						<section class="block">
							<h3>显示</h3>
							<div class="rows">
								<div class="row">
									<span class="label orange">颜色</span>
									<i class="chev"></i>
									<button class="swatch" aria-label="颜色"></button>
									<button class="dropper" aria-label="拾色">{@render icon('dropper')}</button>
								</div>
								<div class="row">
									<i class="chev outer"></i>
									<label class="label" for="clip">视图修剪</label>
									<div class="select wide">
										<select id="clip"><option>中</option></select>
									</div>
								</div>
								<div class="row">
									<label class="label" for="lod">细节级别</label>
									<input id="lod" class="field" value="{detail} %" />
									<input class="slider" type="range" min="0" max="100" bind:value={detail} aria-label="细节级别" />
								</div>
								<div class="row">
									<label class="label" for="editor-lod">将渲染细节级别设置用于编辑器渲染</label>
									<input id="editor-lod" class="check" type="checkbox" />
								</div>
							</div>
						</section>

						<section class="block last">
							<h3>色彩管理</h3>
							<div class="linear">
								<label for="linear">线性工作流程</label>
								<input id="linear" class="check" type="checkbox" checked />
							</div>
						</section>
					</div>
					<div class="thumb"></div>
				</div>
			</section>
		</aside>
	</div>

	<footer class="status">
		{@render icon('menu')}
		{@render icon('check')}
		<span
			>Redshift Warning: Redshift RT requires HLSL Shader Model 6.5 available in Windows 10 build number 19041 or later.Current Windows version is 10.0.18362</span
		>
	</footer>
</div>

<style>
	:global(body) {
		background: #2b2b2b;
	}

	.app {
		--bg: #2b2b2b;
		--dark: #1c1c1c;
		--raised: #3d3d3d;
		--accent: #54589c;
		--line: #1f1f1f;
		--text: #a4a4a4;
		--hot: #dcdc8b;
		display: flex;
		flex-direction: column;
		min-height: 100vh;
		overflow: hidden;
		background: var(--bg);
		color: var(--text);
		font-family: 'Noto Sans', 'Noto Sans CJK SC', sans-serif;
		font-size: 16px;
		line-height: 20px;
	}

	.app * {
		box-sizing: border-box;
	}

	button,
	input,
	select {
		margin: 0;
		padding: 0;
		border: 0;
		background: none;
		color: inherit;
		font: inherit;
	}

	button {
		white-space: nowrap;
	}

	svg {
		display: block;
		flex: none;
	}

	.i16 {
		width: 16px;
		height: 16px;
	}

	.hot {
		color: var(--hot);
	}

	.warm {
		color: #e4e4c4;
	}

	/* window frame */
	.titlebar {
		display: flex;
		align-items: center;
		gap: 40px;
		height: 23px;
		padding: 0 21px 0 3px;
		background: #fff;
		color: #000;
		font-size: 12px;
	}

	.titlebar .title {
		flex: 1;
		margin-left: -36px;
	}

	.titlebar button {
		width: 6px;
		display: flex;
		justify-content: center;
	}

	.titlebar button svg {
		width: 12px;
	}

	.docbar {
		display: flex;
		align-items: center;
		height: 36px;
		background: var(--dark);
	}

	.history {
		width: 36px;
		padding-left: 10px;
		color: #4a4a4a;
	}

	.history svg {
		width: 24px;
		height: 22px;
	}

	.doc {
		align-self: flex-end;
		display: flex;
		align-items: center;
		justify-content: space-between;
		width: 130px;
		height: 33px;
		margin-left: 8px;
		padding: 0 11px 1px;
		background: var(--bg);
		color: #d4d4d4;
	}

	.doc button svg {
		width: 12px;
	}

	.plus {
		margin-left: 13px;
	}

	.plus svg {
		width: 14px;
	}

	.layouts {
		align-self: stretch;
		display: flex;
		gap: 46px;
		margin-left: auto;
		margin-right: 36px;
		color: #6c6c6c;
	}

	.layouts button {
		position: relative;
		padding: 0 8px 1px;
	}

	.layouts .active {
		padding-bottom: 0;
		color: #e0e0e0;
		font-style: italic;
		border-top: 2px solid transparent;
		border-bottom: 3px solid #6567b5;
	}

	.layouts .slanted {
		min-width: 82px;
		font-style: italic;
		text-align: right;
	}

	.avatar {
		position: absolute;
		left: -6px;
		top: 6px;
		z-index: 3;
		width: 50px;
		height: 50px;
	}

	.newui {
		display: flex;
		align-items: center;
		gap: 26px;
		height: 22px;
		margin-left: 28px;
		margin-right: 14px;
		padding-left: 20px;
		border-left: 1px solid #d0d0d0;
		color: #d0d0d0;
	}

	.toggle {
		appearance: none;
		width: 27px;
		height: 14px;
		border-radius: 7px;
		background: radial-gradient(circle at 7px 7px, #222 4px, #b4b4b4 5px);
	}

	.menu {
		display: flex;
		align-items: center;
		gap: 14px;
	}

	.menu.main {
		height: 36px;
		padding: 0 8px 2px;
	}

	/* tool buttons */
	.work {
		flex: 1;
		display: flex;
		min-height: 0;
	}

	.rail {
		width: 38px;
		flex: none;
	}

	.rail .group {
		display: flex;
		flex-direction: column;
		width: 36px;
		margin-top: 10px;
	}

	.rail .group.tight {
		margin-top: 4px;
	}

	.rail .group.wide {
		margin-top: 20px;
	}

	.rail .grip + .group {
		margin-top: 0;
	}

	.rail .tool + .tool {
		border-top: 1px solid #303030;
	}

	.rail.create {
		width: 40px;
		padding-left: 3px;
	}

	.grip {
		height: 28px;
		margin: 0 3px;
		background: radial-gradient(circle at 1px 1px, #484848 1px, transparent 1px) 0 1px / 3px 3px repeat-x;
	}

	.group {
		display: flex;
		border-radius: 4px;
		overflow: hidden;
		background: var(--raised);
	}

	.tool {
		position: relative;
		width: 36px;
		height: 36px;
		overflow: hidden;
	}

	.tool svg {
		width: 100%;
		height: 100%;
	}

	.tool.on {
		background: var(--accent);
	}

	.grey::after,
	.yellow::after {
		content: '';
		position: absolute;
		right: 1px;
		bottom: 1px;
		border-style: solid;
		border-width: 0 0 5px 5px;
		border-color: transparent transparent #b4b4b4;
	}

	.yellow::after {
		border-bottom-color: #e0dc84;
	}

	.centre {
		flex: 1;
		min-width: 0;
		display: flex;
		flex-direction: column;
	}

	.toolbar,
	.controls {
		display: flex;
		justify-content: space-between;
	}

	.toolbar {
		height: 38px;
		padding: 0 2px 0 7px;
		border-bottom: 2px solid var(--line);
	}

	.cluster {
		display: flex;
	}

	.cluster .group {
		margin-left: 10px;
		height: min-content;
	}

	.cluster .group.none {
		margin-left: 0;
	}

	.cluster .group.tight {
		margin-left: 4px;
	}

	.cluster .group.wide {
		margin-left: 20px;
	}

	.cluster .tool + .tool {
		border-left: 1px solid #303030;
	}

	.icons {
		display: flex;
		gap: 4px;
		margin-left: auto;
		color: #9a9a9a;
	}

	.icons .off {
		color: #4d4d4d;
	}

	.burger {
		margin-right: -5px;
	}

	.bright {
		color: #fff;
	}

	.viewmenu {
		height: 29px;
		padding: 0 4px 1px 5px;
	}

	/* 3D view */
	.viewport {
		position: relative;
		flex: 1;
		min-height: 300px;
		margin-right: 1px;
		border: 1px solid #6a6a6a;
		overflow: hidden;
		color: #e6e6e6;
	}

	.scene {
		position: absolute;
		inset: 0;
		width: 100%;
		height: 100%;
	}

	.tag {
		position: absolute;
		display: flex;
		align-items: center;
		gap: 4px;
		padding: 1px 3px;
		border-radius: 3px;
		background: rgba(0, 0, 0, 0.25);
	}

	.tag.name {
		top: 3px;
		left: 1px;
	}

	.tag.cam {
		top: 3px;
		left: 50%;
		margin-left: -56px;
	}

	.tag.mode {
		top: 362px;
		left: 1px;
	}

	.tag.spacing {
		right: 3px;
		bottom: 4px;
	}

	.particles {
		position: absolute;
		top: 11px;
		left: 251px;
		display: flex;
		flex-direction: column;
		align-items: flex-start;
		color: #ffb800;
		line-height: 29px;
	}

	.particles span {
		padding: 0 4px;
		background: #595959;
	}

	.gizmo {
		position: absolute;
		top: 0;
		right: 10px;
		width: 40px;
		height: 64px;
		font-family: 'Liberation Sans', sans-serif;
		font-size: 15px;
		text-anchor: middle;
	}

	/* timeline */
	.timeline {
		padding: 9px 0 3px 7px;
		background: radial-gradient(circle at 1px 1px, #454545 1px, transparent 1px) 2px 1px / 3px 4px repeat-x;
	}

	.controls {
		padding-right: 2px;
	}

	.controls .tool {
		width: 28px;
		height: 28px;
	}

	.field {
		width: 102px;
		height: 25px;
		border-radius: 4px;
		background: #1b1b1b;
		color: #dedede;
		text-align: center;
	}

	.now {
		margin: 2px 1px 0 11px;
	}

	.ruler {
		height: 27px;
		overflow: hidden;
	}

	.ruler svg {
		width: 100%;
		height: 27px;
	}

	.ruler text {
		fill: #a4a4a4;
		font-size: 15px;
		text-anchor: middle;
	}

	.ruler .head {
		fill: #6d70b8;
	}

	.range {
		position: relative;
		display: flex;
		align-items: center;
		gap: 7px;
		margin-right: -1px;
	}

	/* highlight boxes drawn over the end frames and the frame rate */
	.range::after,
	.marked::after {
		content: '';
		position: absolute;
		z-index: 2;
		border: 3px solid #ed1c24;
		pointer-events: none;
	}

	.range::after {
		top: -28px;
		right: -11px;
		bottom: -13px;
		width: 221px;
		box-sizing: border-box;
	}

	.bar {
		flex: 1;
		display: flex;
		align-items: center;
		gap: 8px;
		height: 17px;
		padding: 0 4px;
		border-radius: 4px;
		background: var(--raised);
		color: #c4c4c4;
	}

	.bar i {
		width: 5px;
		height: 10px;
		background: repeating-linear-gradient(90deg, #5d5d5d 0 1px, transparent 1px 2px);
	}

	.bar .to {
		margin-left: auto;
		margin-right: 2px;
	}

	/* side panels */
	.panels {
		display: flex;
		flex-direction: column;
		width: 803px;
		flex: none;
		border-left: 1px solid var(--line);
	}

	.panel .tabs {
		display: flex;
		height: 30px;
		background: var(--dark);
		color: #6c6c6c;
	}

	.panel .tabs button {
		padding: 0 14px 2px;
	}

	.panel .tabs .active {
		background: var(--bg);
		color: #d4d4d4;
		margin-right: 2px;
	}

	.panel .menu {
		height: 30px;
		padding: 0 3px 3px 5px;
		border-bottom: 1px solid var(--line);
	}

	.objects {
		flex: 1;
		display: flex;
		flex-direction: column;
	}

	.tree {
		flex: 1;
		border-bottom: 2px solid var(--line);
	}

	.gutter {
		width: 49px;
		height: 100%;
		border-right: 1px solid var(--line);
	}

	.subject {
		display: flex;
		align-items: center;
		gap: 8px;
		height: 33px;
		padding: 0 8px 1px;
	}

	.preset {
		width: 112px;
		margin-left: auto;
	}

	.select {
		position: relative;
		height: 25px;
		border-radius: 6px;
		background: var(--raised);
		color: #bcbcbc;
	}

	.select::after {
		content: '';
		position: absolute;
		right: 7px;
		top: 12px;
		border: solid transparent;
		border-width: 4px 3px 0;
		border-top-color: #c0c0c0;
		pointer-events: none;
	}

	.preset::before {
		content: '';
		position: absolute;
		right: 19px;
		width: 1px;
		height: 100%;
		background: #2b2b2b;
	}

	.select select {
		appearance: none;
		width: 100%;
		height: 100%;
		padding: 0 0 2px 7px;
	}

	.attrtabs {
		display: flex;
		flex-wrap: wrap;
		gap: 4px;
		padding: 0 4px 0 8px;
	}

	.attrtabs button {
		display: flex;
		align-items: center;
		gap: 5px;
		height: 28px;
		padding: 0 14px;
		border-radius: 4px;
		background: #383838;
		color: #b4b4b4;
	}

	.attrtabs .hot {
		color: var(--hot);
	}

	.attrtabs .on {
		background: var(--accent);
		color: #fff;
	}

	.scroller {
		display: flex;
		gap: 4px;
		padding: 0 12px 0 6px;
	}

	.thumb {
		width: 5px;
		height: 504px;
		margin-top: 4px;
		border-radius: 3px;
		background: #4a4a4a;
	}

	.form {
		flex: 1;
		min-width: 0;
	}

	h2,
	h3 {
		margin: 0;
		font-weight: 500;
	}

	h2 {
		padding-left: 2px;
		font-size: 17px;
		line-height: 36px;
		color: #fff;
	}

	h3 {
		position: relative;
		padding-left: 24px;
		font-size: 15px;
		line-height: 34px;
		color: #c0c0c0;
	}

	h3::before {
		content: '';
		position: absolute;
		left: 11px;
		top: 12px;
		width: 5px;
		height: 5px;
		border: solid #b4b4b4;
		border-width: 0 1px 1px 0;
		transform: rotate(45deg);
	}

	.scale {
		display: flex;
		align-items: center;
		padding-left: 24px;
		gap: 5px;
	}

	.unit {
		width: 65px;
		border-radius: 4px;
	}

	.pill {
		display: block;
		height: 25px;
		margin: 3px 0 10px 13px;
		padding: 0 11px 2px;
		border-radius: 10px;
		background: var(--raised);
		color: #bcbcbc;
	}

	.block {
		padding-bottom: 8px;
		border-top: 1px solid var(--line);
	}

	.times {
		display: grid;
		grid-template-columns: 171px 171px;
		gap: 4px 25px;
		margin-bottom: 5px;
		padding-left: 32px;
	}

	.pair {
		position: relative;
		display: flex;
		align-items: center;
		justify-content: space-between;
	}

	.marked::after {
		inset: -14px -22px -4px -31px;
	}

	.checks {
		display: grid;
		grid-template-columns: 53px 52px 101px 52px 53px 12px;
		grid-auto-rows: 27px;
		align-items: center;
		margin-bottom: 2px;
		padding-left: 32px;
		white-space: nowrap;
	}

	.check {
		appearance: none;
		flex: none;
		width: 12px;
		height: 12px;
		border: 1px solid #8a8a8a;
		border-radius: 2px;
	}

	.check:checked {
		border-color: #5c60ac;
		background: #5c60ac
			url("data:image/svg+xml,%3Csvg xmlns='http://www.w3.org/2000/svg' viewBox='0 0 10 10'%3E%3Cpath d='M2 5l2 3 4-6' fill='none' stroke='white' stroke-width='1.500'/%3E%3C/svg%3E");
	}

	.rows {
		display: grid;
		grid-auto-rows: 28px;
	}

	.row {
		position: relative;
		display: flex;
		align-items: center;
		padding: 0 0 2px 32px;
	}

	.row .label {
		width: 261px;
		white-space: nowrap;
	}

	.row .orange {
		width: 251px;
		color: #f39a3c;
	}

	.chev {
		width: 5px;
		height: 5px;
		margin-right: 5px;
		border: solid #b4b4b4;
		border-width: 1px 1px 0 0;
		transform: rotate(45deg);
	}

	.chev.outer {
		position: absolute;
		left: 10px;
	}

	.swatch {
		width: 98px;
		height: 22px;
		background: #c9c9c9;
	}

	.dropper {
		margin-left: 10px;
		color: #999;
	}

	.wide {
		flex: 1;
		border-radius: 4px;
	}

	.slider {
		appearance: none;
		flex: 1;
		height: 14px;
		margin-left: 4px;
	}

	.slider::-webkit-slider-runnable-track {
		height: 4px;
		border-radius: 2px;
		background: #54589c;
	}

	.slider::-webkit-slider-thumb {
		appearance: none;
		width: 4px;
		height: 12px;
		margin-top: -4px;
		border-radius: 2px;
		background: #c0c0c0;
	}

	.last {
		padding-bottom: 0;
	}

	.linear {
		display: flex;
		align-items: center;
		gap: 5px;
		height: 37px;
		padding: 2px 0 0 32px;
	}

	.status {
		display: flex;
		align-items: center;
		gap: 8px;
		height: 25px;
		padding: 0 5px 1px;
		background: var(--dark);
	}
</style>
